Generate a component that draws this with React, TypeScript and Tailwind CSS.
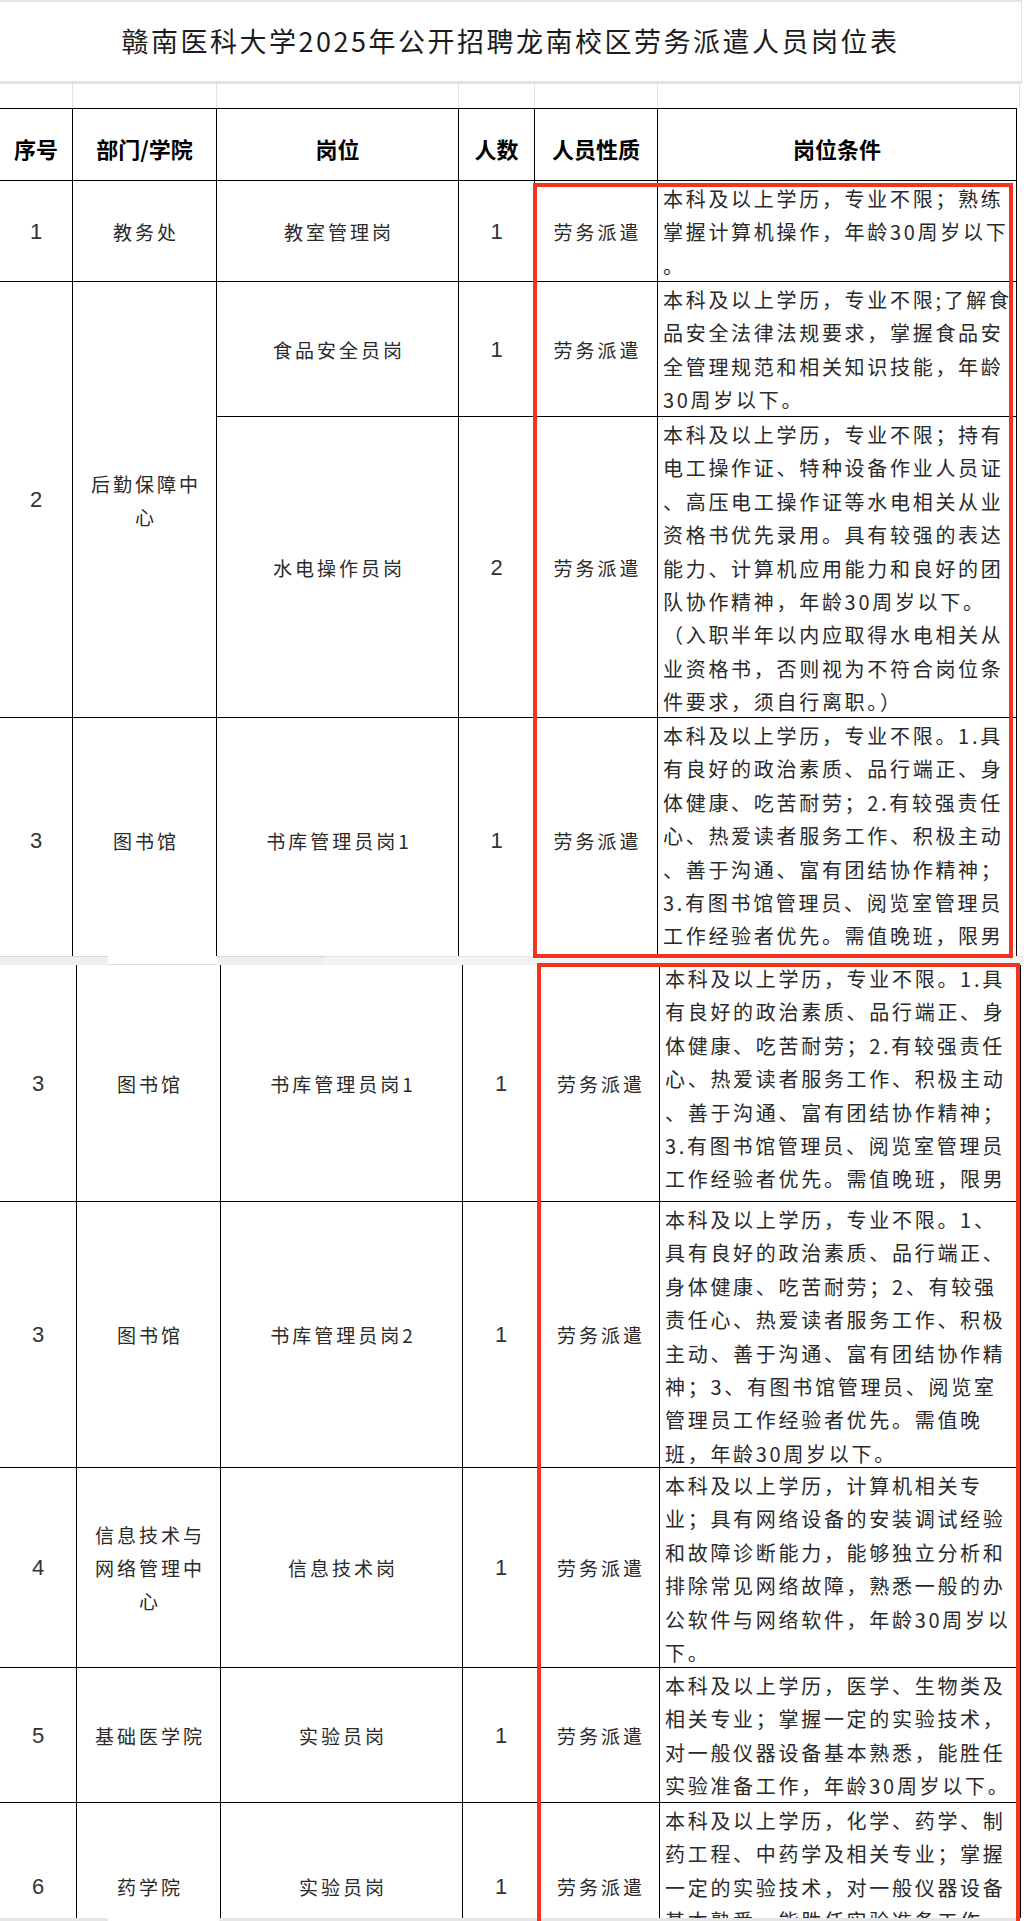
import type { ReactNode } from 'react';

type Cond = string[];

const ROW3_COND: Cond = [
  '本科及以上学历，专业不限。1.具',
  '有良好的政治素质、品行端正、身',
  '体健康、吃苦耐劳；2.有较强责任',
  '心、热爱读者服务工作、积极主动',
  '、善于沟通、富有团结协作精神；',
  '3.有图书馆管理员、阅览室管理员',
  '工作经验者优先。需值晚班，限男',
];

function Cell({ children, className = '' }: { children?: ReactNode; className?: string }) {
  return <div className={`overflow-hidden border-r border-b border-black ${className}`}>{children}</div>;
}

function Mid({ children, className = '' }: { children?: ReactNode; className?: string }) {
  return (
    <Cell className={`flex items-center justify-center text-center ${className}`}>
      <div>{children}</div>
    </Cell>
  );
}

function Num({ v }: { v: string }) {
  return <Mid className="font-['Liberation_Sans',sans-serif] text-[22px] text-[#333]">{v}</Mid>;
}

function Txt({ lines }: { lines: string[] }) {
  return (
    <Mid className="text-[19px] leading-[33px] tracking-[3px] text-[#2a2a2a]">
      {lines.map((l) => (
        <div key={l} className="whitespace-nowrap pl-[3px]">{l}</div>
      ))}
    </Mid>
  );
}

function Conditions({ lines, shift = '' }: { lines: Cond; shift?: string }) {
  return (
    <Cell>
      <div className={`pl-[5px] pt-[1px] text-[20px] leading-[33.4px] tracking-[2.7px] text-[#2a2a2a] ${shift}`}>
        {lines.map((l, i) => (
          <div key={i} className="whitespace-nowrap">{l}</div>
        ))}
      </div>
    </Cell>
  );
}

function Head({ label }: { label: string }) {
  return (
    <Cell className="flex items-center justify-center pt-2 text-[22px] font-bold text-black">
      {label}
    </Cell>
  );
}

export default function App() {
  return (
    <div className="relative h-[1921px] w-[1024px] overflow-hidden bg-white font-['Noto_Sans_CJK_SC',sans-serif]">
      {/* first capture */}
      <div className="h-[956px] overflow-hidden">
        <div className="flex h-[84px] w-[1022px] items-center justify-center border-t-2 border-r border-b-[3px] border-[#e3e3e3] text-[27px] tracking-[2.5px] text-[#1c1c1c]">
          赣南医科大学2025年公开招聘龙南校区劳务派遣人员岗位表
        </div>
        <div className="grid h-[24px] grid-cols-[73px_144px_242px_76px_123px_362px]">
          {[0, 1, 2, 3, 4, 5].map((i) => (
            <div key={i} className="border-r border-[#e2e2e2]" />
          ))}
        </div>
        <div className="grid w-[1017px] grid-cols-[73px_144px_242px_76px_123px_359px] grid-rows-[72px_101px_135px_301px_246px] border-t border-black">
          <Head label="序号" />
          <Head label="部门/学院" />
          <Head label="岗位" />
          <Head label="人数" />
          <Head label="人员性质" />
          <Head label="岗位条件" />

          <Num v="1" />
          <Txt lines={['教务处']} />
          <Txt lines={['教室管理岗']} />
          <Num v="1" />
          <Txt lines={['劳务派遣']} />
          <Conditions
            lines={['本科及以上学历，专业不限；熟练', '掌握计算机操作，年龄30周岁以下', '。']}
          />

          <Mid className="row-span-2 font-['Liberation_Sans',sans-serif] text-[22px] text-[#333]">2</Mid>
          <Mid className="row-span-2 text-[19px] leading-[33px] tracking-[3px] text-[#2a2a2a]">
            <div className="pl-[3px]">后勤保障中</div>
            <div className="pl-[3px]">心</div>
          </Mid>
          <Txt lines={['食品安全员岗']} />
          <Num v="1" />
          <Txt lines={['劳务派遣']} />
          <Conditions
            lines={[
              '本科及以上学历，专业不限;了解食',
              '品安全法律法规要求，掌握食品安',
              '全管理规范和相关知识技能，年龄',
              '30周岁以下。',
            ]}
          />

          <Txt lines={['水电操作员岗']} />
          <Num v="2" />
          <Txt lines={['劳务派遣']} />
          <Conditions
            lines={[
              '本科及以上学历，专业不限；持有',
              '电工操作证、特种设备作业人员证',
              '、高压电工操作证等水电相关从业',
              '资格书优先录用。具有较强的表达',
              '能力、计算机应用能力和良好的团',
              '队协作精神，年龄30周岁以下。',
              '（入职半年以内应取得水电相关从',
              '业资格书，否则视为不符合岗位条',
              '件要求，须自行离职。）',
            ]}
          />

          <Num v="3" />
          <Txt lines={['图书馆']} />
          <Txt lines={['书库管理员岗1']} />
          <Num v="1" />
          <Txt lines={['劳务派遣']} />
          <Conditions lines={ROW3_COND} />
        </div>
      </div>

      {/* seam between captures */}
      <div className="flex h-[9px]">
        <div className="w-[108px] border-t border-[#d6d6d6] bg-[#efefef]" />
        <div className="w-[109px] border-b border-[#dcdcdc] bg-white" />
        <div className="w-[108px] border-t border-[#d6d6d6] bg-[#efefef]" />
        <div className="flex-1 border-t border-[#e8e8e8] bg-[#f3f3f3]" />
      </div>

      {/* second capture */}
      <div className="h-[953px] overflow-hidden">
        <div className="grid w-[1021px] grid-cols-[77px_144px_242px_77px_120px_361px] grid-rows-[237px_266px_200px_135px_168px]">
          <Num v="3" />
          <Txt lines={['图书馆']} />
          <Txt lines={['书库管理员岗1']} />
          <Num v="1" />
          <Txt lines={['劳务派遣']} />
          <Conditions lines={ROW3_COND} shift="-mt-[4px]" />

          <Num v="3" />
          <Txt lines={['图书馆']} />
          <Txt lines={['书库管理员岗2']} />
          <Num v="1" />
          <Txt lines={['劳务派遣']} />
          <Conditions
            lines={[
              '本科及以上学历，专业不限。1、',
              '具有良好的政治素质、品行端正、',
              '身体健康、吃苦耐劳；2、有较强',
              '责任心、热爱读者服务工作、积极',
              '主动、善于沟通、富有团结协作精',
              '神；3、有图书馆管理员、阅览室',
              '管理员工作经验者优先。需值晚',
              '班，年龄30周岁以下。',
            ]}
          />

          <Num v="4" />
          <Txt lines={['信息技术与', '网络管理中', '心']} />
          <Txt lines={['信息技术岗']} />
          <Num v="1" />
          <Txt lines={['劳务派遣']} />
          <Conditions
            lines={[
              '本科及以上学历，计算机相关专',
              '业；具有网络设备的安装调试经验',
              '和故障诊断能力，能够独立分析和',
              '排除常见网络故障，熟悉一般的办',
              '公软件与网络软件，年龄30周岁以',
              '下。',
            ]}
          />

          <Num v="5" />
          <Txt lines={['基础医学院']} />
          <Txt lines={['实验员岗']} />
          <Num v="1" />
          <Txt lines={['劳务派遣']} />
          <Conditions
            lines={[
              '本科及以上学历，医学、生物类及',
              '相关专业；掌握一定的实验技术，',
              '对一般仪器设备基本熟悉，能胜任',
              '实验准备工作，年龄30周岁以下。',
            ]}
          />

          <Num v="6" />
          <Txt lines={['药学院']} />
          <Txt lines={['实验员岗']} />
          <Num v="1" />
          <Txt lines={['劳务派遣']} />
          <Conditions
            lines={[
              '本科及以上学历，化学、药学、制',
              '药工程、中药学及相关专业；掌握',
              '一定的实验技术，对一般仪器设备',
              '基本熟悉，能胜任实验准备工作，',
            ]}
          />
        </div>
      </div>

      {/* bottom edge */}
      <div className="flex h-[3px]">
        <div className="w-[108px] bg-[#e6e6e6]" />
        <div className="w-[111px] bg-white" />
        <div className="w-[801px] bg-[#e6e6e6]" />
      </div>

      {/* red annotation boxes */}
      <div className="absolute top-[183px] left-[533px] h-[775px] w-[480px] border-4 border-[#f0351f]" />
      <div className="absolute top-[963px] left-[537px] h-[1000px] w-[483px] border-4 border-[#f0351f]" />
    </div>
  );
}
